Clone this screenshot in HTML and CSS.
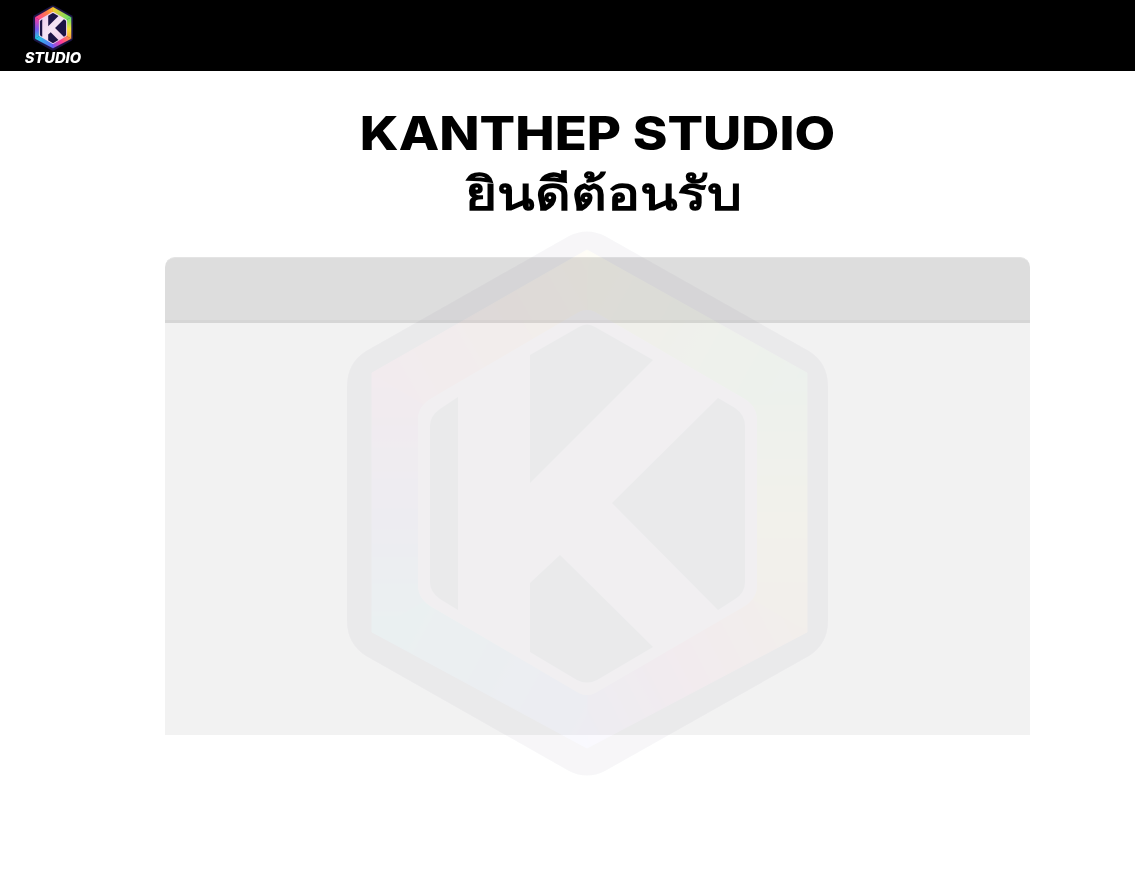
FILE: index.html
```html
<!DOCTYPE html>
<html lang="en">
<head>
    <meta charset="UTF-8">
    <meta name="viewport" content="width=device-width, initial-scale=1.0">
    <title>Kanthep Studio</title>
    <link rel="stylesheet" href="styles.css">
</head>
<body>
    <svg class="sprite" aria-hidden="true">
        <defs>
            <linearGradient id="edge-0" gradientUnits="userSpaceOnUse" x1="240" y1="20" x2="460" y2="143">
                <stop offset="0" stop-color="#ffc928"/><stop offset="1" stop-color="#5fe06a"/>
            </linearGradient>
            <linearGradient id="edge-1" gradientUnits="userSpaceOnUse" x1="460" y1="143" x2="460" y2="402">
                <stop offset="0" stop-color="#5fe06a"/><stop offset="0.55" stop-color="#f5e43a"/><stop offset="1" stop-color="#ff9a3c"/>
            </linearGradient>
            <linearGradient id="edge-2" gradientUnits="userSpaceOnUse" x1="460" y1="402" x2="240" y2="518">
                <stop offset="0" stop-color="#ff9a3c"/><stop offset="0.5" stop-color="#ff3b9a"/><stop offset="1" stop-color="#6a5cff"/>
            </linearGradient>
            <linearGradient id="edge-3" gradientUnits="userSpaceOnUse" x1="240" y1="518" x2="25" y2="402">
                <stop offset="0" stop-color="#6a5cff"/><stop offset="1" stop-color="#1ecfe0"/>
            </linearGradient>
            <linearGradient id="edge-4" gradientUnits="userSpaceOnUse" x1="25" y1="402" x2="25" y2="143">
                <stop offset="0" stop-color="#1ecfe0"/><stop offset="0.45" stop-color="#7a55f0"/><stop offset="1" stop-color="#ff3b9a"/>
            </linearGradient>
            <linearGradient id="edge-5" gradientUnits="userSpaceOnUse" x1="25" y1="143" x2="240" y2="20">
                <stop offset="0" stop-color="#ff3b9a"/><stop offset="0.6" stop-color="#ff7a4a"/><stop offset="1" stop-color="#ffc928"/>
            </linearGradient>
            <linearGradient id="k-fill" gradientUnits="userSpaceOnUse" x1="70" y1="80" x2="410" y2="470">
                <stop offset="0" stop-color="#eec8ee"/><stop offset="0.5" stop-color="#f4e4f4"/><stop offset="1" stop-color="#f3c4e4"/>
            </linearGradient>
            <symbol id="k-logo" viewBox="0 0 481 547">
                <path fill="#1c1445" d="M222 6Q240 -3 258 6L462 121Q481 133 481 156L481 391Q481 414 462 426L258 541Q240 550 222 541L19 426Q0 414 0 391L0 156Q0 133 19 121Z"/>
                <path fill="url(#edge-0)" stroke="url(#edge-0)" d="M240 273L240 20L460 143Z"/>
                <path fill="url(#edge-1)" stroke="url(#edge-1)" d="M240 273L460 143L460 402Z"/>
                <path fill="url(#edge-2)" stroke="url(#edge-2)" d="M240 273L460 402L240 518Z"/>
                <path fill="url(#edge-3)" stroke="url(#edge-3)" d="M240 273L240 518L25 402Z"/>
                <path fill="url(#edge-4)" stroke="url(#edge-4)" d="M240 273L25 402L25 143Z"/>
                <path fill="url(#edge-5)" stroke="url(#edge-5)" d="M240 273L25 143L240 20Z"/>
                <path fill="url(#k-fill)" d="M232 82Q240 78 248 82L396 168Q410 176 410 190L410 355Q410 369 396 377L248 463Q240 467 232 463L85 377Q71 369 71 355L71 190Q71 176 85 168Z"/>
                <path class="k-tint" d="M232 82Q240 78 248 82L396 168Q410 176 410 190L410 355Q410 369 396 377L248 463Q240 467 232 463L85 377Q71 369 71 355L71 190Q71 176 85 168Z"/>
                <path fill="#1c1445" d="M183 125L232 97Q240 92 248 97L306 130L183 253Z"/>
                <path fill="#1c1445" d="M371 168L388 178Q398 185 398 196L398 352Q398 363 388 369L371 380L265 273Z"/>
                <path fill="#1c1445" d="M213 325L306 417L250 450Q240 455 230 450L183 422L183 353Z"/>
                <path fill="#1c1445" d="M111 167L111 380L93 369Q83 362 83 352L83 196Q83 186 93 179Z"/>
            </symbol>
        </defs>
    </svg>

    <header class="topbar">
        <a class="brand" href="#">
            <svg class="brand-mark"><use href="#k-logo"/></svg>
            <span class="brand-name">STUDIO</span>
        </a>
    </header>

    <main class="content">
        <h1 class="title">
            <span class="title-en">KANTHEP STUDIO</span>
            <span class="title-th">ยินดีต้อนรับ</span>
        </h1>
        <section class="panel">
            <div class="panel-head"></div>
            <div class="panel-body"></div>
        </section>
    </main>

    <svg class="watermark" aria-hidden="true"><use href="#k-logo"/></svg>
</body>
</html>
```

FILE: styles.css
```css
body {
    margin: 0;
    padding: 0;
    height: 880px;
    background: #fff;
    overflow: hidden;
    font-family: 'Liberation Sans', 'Noto Sans', sans-serif;
    color: #000;
}

.sprite {
    position: absolute;
    width: 0;
    height: 0;
}

.k-tint {
    fill: var(--k-tint, transparent);
}

.topbar {
    height: 71px;
    background: #000;
    padding-left: 25px;
    box-sizing: border-box;
}

.brand {
    display: inline-flex;
    flex-direction: column;
    align-items: center;
    padding-top: 5px;
    text-decoration: none;
    width: 56px;
}

.brand-mark {
    width: 40px;
    height: 46px;
    display: block;
}

.brand-name {
    color: #fff;
    font-family: Inter, 'Liberation Sans', sans-serif;
    font-size: 14px;
    line-height: 13px;
    font-weight: 800;
    font-style: italic;
    transform: scaleX(1.05);
    white-space: nowrap;
}

.content {
    padding: 0 105px 0 165px;
}

.title {
    margin: 32px 0 0;
    text-align: center;
    font-family: Inter, 'Noto Sans', 'Liberation Sans', sans-serif;
    font-weight: 800;
    font-size: 46px;
    line-height: 60px;
}

.title-en,
.title-th {
    display: block;
}

.title-en {
    transform: scaleX(1.145);
}

.title-th {
    transform: translateX(6px) scaleX(1.2);
}

.panel {
    margin-top: 34px;
    height: 478px;
    display: flex;
    flex-direction: column;
}

.panel-head {
    height: 66px;
    box-sizing: border-box;
    background: #dddddd;
    border-top: 1px solid #e4e4e4;
    border-bottom: 3px solid #d6d6d6;
    border-radius: 10px 10px 0 0;
}

.panel-body {
    flex: 1;
    background: #f2f2f2;
}

.watermark {
    --k-tint: #d6b4de;
    position: absolute;
    left: 347px;
    top: 230px;
    width: 481px;
    height: 547px;
    opacity: 0.03;
    filter: blur(0.6px);
    pointer-events: none;
}
```
